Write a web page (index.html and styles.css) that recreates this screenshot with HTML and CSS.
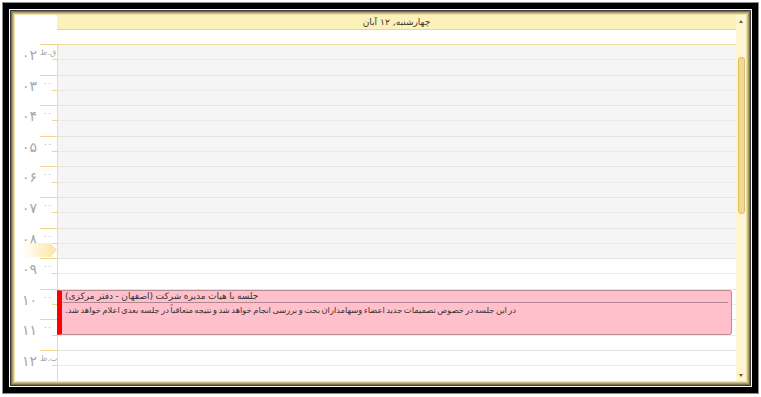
FILE: index.html
```html
<!DOCTYPE html>
<html lang="fa" dir="ltr">
<head>
    <meta charset="UTF-8">
    <title>Scheduler - Day view</title>
    <link rel="stylesheet" href="styles.css">
</head>
<body>
    <div class="window">
        <div class="bezel">
            <div class="trim">
                <div class="scheduler">
                    <div class="grid">
                        <div class="day-head">
                            <div class="corner"></div>
                            <div class="day-title words"><span>آبان</span><span>۱۲</span><span>,چهارشنبه</span></div>
                        </div>
                        <div class="all-day">
                            <div class="corner"></div>
                            <div class="all-day-cell"></div>
                        </div>
                        <div class="slots">
                            <!-- hour labels, big hour + small minutes / am-pm -->
                            <div class="time-col">
                                <div class="hour"><span class="hour-num">۰۲</span><span class="hour-mark"><span class="hour-min">ق.ظ</span></span></div>
                                <div class="hour"><span class="hour-num">۰۳</span><span class="hour-mark"><span class="hour-min">۰۰</span></span></div>
                                <div class="hour"><span class="hour-num">۰۴</span><span class="hour-mark"><span class="hour-min">۰۰</span></span></div>
                                <div class="hour"><span class="hour-num">۰۵</span><span class="hour-mark"><span class="hour-min">۰۰</span></span></div>
                                <div class="hour"><span class="hour-num">۰۶</span><span class="hour-mark"><span class="hour-min">۰۰</span></span></div>
                                <div class="hour"><span class="hour-num">۰۷</span><span class="hour-mark"><span class="hour-min">۰۰</span></span></div>
                                <div class="hour"><span class="hour-num">۰۸</span><span class="hour-mark"><span class="hour-min">۰۰</span></span></div>
                                <div class="hour"><span class="hour-num">۰۹</span><span class="hour-mark"><span class="hour-min">۰۰</span></span></div>
                                <div class="hour"><span class="hour-num">۱۰</span><span class="hour-mark"><span class="hour-min">۰۰</span></span></div>
                                <div class="hour"><span class="hour-num">۱۱</span><span class="hour-mark"><span class="hour-min">۰۰</span></span></div>
                                <div class="hour"><span class="hour-num">۱۲</span><span class="hour-mark"><span class="hour-min">ب.ظ</span></span></div>
                                <div class="now-marker"></div>
                            </div>
                            <div class="day-col">
                                <div class="day-hour off"></div>
                                <div class="day-hour off"></div>
                                <div class="day-hour off"></div>
                                <div class="day-hour off"></div>
                                <div class="day-hour off"></div>
                                <div class="day-hour off"></div>
                                <div class="day-hour off"></div>
                                <div class="day-hour"></div>
                                <div class="day-hour"></div>
                                <div class="day-hour"></div>
                                <div class="day-hour"></div>

                                <div class="event">
                                    <div class="event-title words"><span>(مرکزی</span><span>دفتر</span><span>-</span><span>اصفهان)</span><span>شرکت</span><span>مدیره</span><span>هیات</span><span>با</span><span>جلسه</span></div>
                                    <div class="event-desc words"><span>.شد</span><span>خواهد</span><span>اعلام</span><span>بعدی</span><span>جلسه</span><span>در</span><span>متعاقباً</span><span>نتیجه</span><span>و</span><span>شد</span><span>خواهد</span><span>انجام</span><span>بررسی</span><span>و</span><span>بحث</span><span>وسهامداران</span><span>اعضاء</span><span>جدید</span><span>تصمیمات</span><span>خصوص</span><span>در</span><span>جلسه</span><span>این</span><span>در</span></div>
                                </div>
                            </div>
                        </div>
                    </div>
                    <div class="scrollbar">
                        <span class="scroll-arrow up"></span>
                        <span class="scroll-thumb"></span>
                        <span class="scroll-arrow down"></span>
                    </div>
                </div>
            </div>
        </div>
    </div>
</body>
</html>
```

FILE: styles.css
```css
body {
    margin: 0;
    background: #fff;
    font-family: "DejaVu Sans", sans-serif;
    direction: ltr;
}
.window {
    margin: 2px 2px 3px;
    height: 392px;
    border: 1px solid #8c8c8c;
    box-sizing: border-box;
}
.bezel {
    height: 100%;
    border: 6px solid #000;
    box-sizing: border-box;
}
.trim {
    height: 100%;
    border: 1px solid #fff;
    box-sizing: border-box;
}
.scheduler {
    display: flex;
    height: 100%;
    padding: 4px;
    border: 1px solid #3b3b3b;
    box-sizing: border-box;
    background: #fff;
    /* khaki rim, dark outside to pale inside */
    box-shadow: inset 0 0 0 1px #7d7448, inset 0 0 0 2px #a99c62, inset 0 0 0 3px #cfc088, inset 0 0 0 4px #ebe0ae;
}
.grid {
    flex: 1;
    min-width: 0;
    display: flex;
    flex-direction: column;
}
/* one box per word */
.words {
    display: flex;
    column-gap: 3px;
    white-space: nowrap;
}
.day-head,
.all-day {
    display: flex;
}
.corner {
    width: 42px;
    flex-shrink: 0;
}
.day-title {
    flex: 1;
    justify-content: center;
    height: 14px;
    line-height: 14px;
    background: #fdf1ba;
    border-bottom: 1px solid #efd68b;
    color: #333;
    font-size: 9px;
}
.all-day {
    height: 14px;
}
.all-day-cell {
    flex: 1;
}
.slots {
    flex: 1;
    min-height: 0;
    display: flex;
    overflow: hidden;
}
.time-col {
    width: 42px;
    flex-shrink: 0;
    position: relative;
}
.hour {
    display: flex;
    height: 30.6px;
}
.hour-num {
    flex: 1;
    padding: 3px 3px 0 0;
    color: #a6a6a6;
    font-size: 14px;
    line-height: 16px;
    text-align: right;
}
.hour-mark {
    width: 17px;
    border-top: 1px solid #f0d68a;
    background: linear-gradient(#f0d68a, #f0d68a) no-repeat right 50% / 5px 1px;
}
.hour-min {
    display: block;
    padding: 3px 2px 0 0;
    color: #a8a8a8;
    font-size: 8px;
    line-height: 9px;
    text-align: center;
}
.now-marker {
    position: absolute;
    top: 199px;
    left: 7px;
    width: 35px;
    height: 14px;
    background: linear-gradient(to right, rgba(255, 255, 255, 0.6), #fbe6a2);
    clip-path: polygon(0 0, 82% 0, 100% 50%, 82% 100%, 0 100%);
}
.day-col {
    flex: 1;
    position: relative;
    border-left: 1px solid #dadada;
}
.day-hour {
    height: 30.6px;
    box-sizing: border-box;
    border-top: 1px solid #e4e4e4;
    background: linear-gradient(#ebebeb, #ebebeb) no-repeat 0 50% / 100% 1px;
}
.day-hour.off {
    background-color: #f5f5f5;
}
.day-hour:first-child {
    border-top-color: #f1dc9c;
}
.event {
    position: absolute;
    top: 245.8px;
    left: -1px;
    right: 4px;
    height: 45px;
    box-sizing: border-box;
    background: #ffc0cb;
    border: 1px solid #b98c95;
    border-left: 5px solid #ff0000;
    border-radius: 0 3px 3px 0;
    color: #333;
}
.event-title {
    margin: 0 3px 0 1px;
    padding-left: 2px;
    column-gap: 2.5px;
    font-size: 9px;
    line-height: 11px;
    border-bottom: 1px solid #b0868f;
}
.event-desc {
    padding: 1px 3px;
    column-gap: 1.5px;
    font-size: 8.3px;
    line-height: 12px;
}
.scrollbar {
    width: 10px;
    display: flex;
    flex-direction: column;
    align-items: center;
    background: #fdf5d2;
}
.scroll-arrow {
    width: 0;
    height: 0;
    border-left: 2px solid transparent;
    border-right: 2px solid transparent;
}
.scroll-arrow.up {
    margin-top: 5px;
    border-bottom: 3px solid #6b5d2a;
}
.scroll-arrow.down {
    margin-top: auto;
    margin-bottom: 4px;
    border-top: 3px solid #6b5d2a;
}
.scroll-thumb {
    margin-top: 34px;
    width: 5px;
    height: 155px;
    background: #f2d98c;
    border: 1px solid #d8bf74;
    border-radius: 3px;
}
```
